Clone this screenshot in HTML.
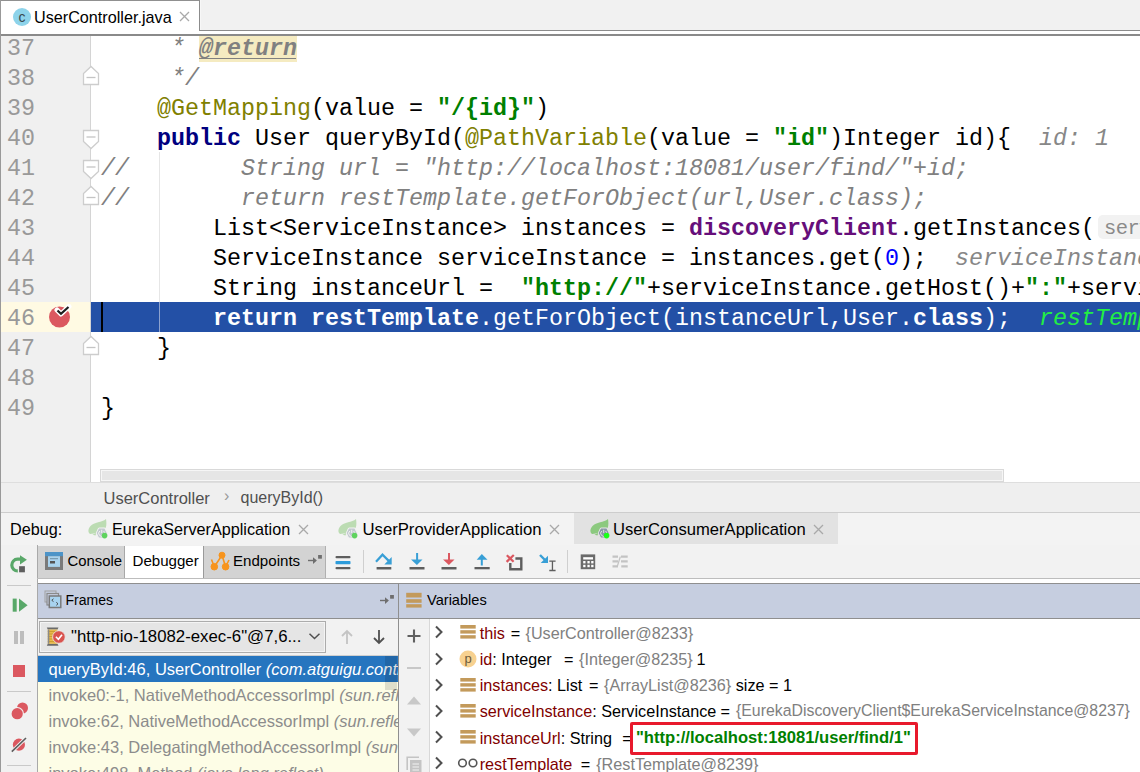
<!DOCTYPE html>
<html><head><meta charset="utf-8"><style>
*{box-sizing:border-box}
html,body{margin:0;padding:0}
body{width:1140px;height:772px;overflow:hidden;position:relative;background:#f0f0f0;font-family:"Liberation Sans",sans-serif;}
.a{position:absolute}
.mono{font-family:"Liberation Mono",monospace;font-size:23.33px;line-height:30px;white-space:pre}
.ln{position:absolute;left:7px;color:#999999;height:30px}
.cl{position:absolute;left:101px;height:30px;color:#000;padding-top:2px}
.kw{color:#000080;font-weight:bold}
.str{color:#008000;font-weight:bold}
.ann{color:#808000}
.cm{color:#808080;font-style:italic}
.num{color:#0000ff}
.fld{color:#660e7a;font-weight:bold}
.dv{color:#878787;font-style:italic}
.hint{color:#8a8a8a}
.ui{font-family:"Liberation Sans",sans-serif;white-space:pre}
</style></head><body>

<div class="a" style="left:0;top:0;width:200px;height:1px;background:#909090"></div>
<div class="a" style="left:200px;top:0;width:940px;height:30px;background:#f1f1f1"></div>
<div class="a" style="left:200px;top:0;width:1px;height:30px;background:#f7f7f7"></div>
<div class="a" style="left:199px;top:30px;width:941px;height:1px;background:#8c8c8c"></div>
<div class="a" style="left:199px;top:31px;width:941px;height:3px;background:#fff"></div>
<div class="a" style="left:1px;top:1px;width:198px;height:33px;background:#fff"></div>
<div class="a" style="left:199px;top:0;width:1px;height:31px;background:#8c8c8c"></div>
<div class="a" style="left:1px;top:34px;width:1139px;height:2px;background:#8a8a8a"></div>
<div class="a" style="left:13px;top:8px;width:18px;height:18px;border-radius:50%;background:#8dd3ea"></div>
<div class="a ui" style="left:16px;top:5px;width:12px;text-align:center;font-size:14px;line-height:24px;color:#38464c">c</div>
<div class="a ui" style="left:34px;top:7px;font-size:16.2px;line-height:20px;color:#000">UserController.java</div>
<svg class="a" style="left:179px;top:11px" width="11" height="11" viewBox="0 0 11 11"><path d="M1 1 L10 10 M10 1 L1 10" stroke="#a9a9a9" stroke-width="1.3"/></svg>

<div class="a" style="left:0;top:36px;width:1140px;height:446px;background:#fff;overflow:hidden">
<div class="a" style="left:0;top:0;width:1px;height:446px;background:#999"></div>
<div class="a" style="left:1px;top:0;width:89px;height:446px;background:#f0f0f0"></div>
<div class="a" style="left:1px;top:266px;width:89px;height:30px;background:#fffae3"></div>
<div class="a" style="left:90px;top:0;width:1px;height:446px;background:#d4d4d4"></div>
<div class="a" style="left:91px;top:266px;width:1049px;height:30px;background:#2350a6"></div>
<div class="a" style="left:159px;top:116px;width:1px;height:150px;background:#e6e6e6"></div>
<div class="a" style="left:159px;top:266px;width:1px;height:30px;background:#8da2cf"></div>
<div class="a" style="left:101px;top:266px;width:2px;height:30px;background:#000"></div>
<div class="a" style="left:199px;top:-4px;width:98px;height:30px;background:#f5ebc1"></div>
<div class="a" style="left:199px;top:22px;width:97px;height:1px;background:#808080"></div>
<div class="a" style="left:1097.5px;top:178.8px;width:80px;height:24.6px;border-radius:5px;background:#f2f2f2"></div>
<div class="a mono" style="left:1104px;top:180px;font-size:20.5px;line-height:26px;letter-spacing:-0.6px;color:#8a8a8a">serviceId:</div>
<svg class="a" style="left:82px;top:29px" width="18" height="21" viewBox="0 0 18 21"><path d="M1.5 19.5 H16.5 V8.5 L9 1.5 L1.5 8.5 Z" fill="#fff" stroke="#cdcdcd" stroke-width="1.3"/><path d="M4.5 12.5 H13.5" stroke="#c4c4c4" stroke-width="1.3"/></svg>
<svg class="a" style="left:82px;top:299px" width="18" height="21" viewBox="0 0 18 21"><path d="M1.5 19.5 H16.5 V8.5 L9 1.5 L1.5 8.5 Z" fill="#fff" stroke="#cdcdcd" stroke-width="1.3"/><path d="M4.5 12.5 H13.5" stroke="#c4c4c4" stroke-width="1.3"/></svg>
<svg class="a" style="left:82px;top:149px" width="18" height="21" viewBox="0 0 18 21"><path d="M1.5 19.5 H16.5 V8.5 L9 1.5 L1.5 8.5 Z" fill="#fff" stroke="#cdcdcd" stroke-width="1.3"/><path d="M4.5 12.5 H13.5" stroke="#c4c4c4" stroke-width="1.3"/></svg>
<svg class="a" style="left:82px;top:93px" width="18" height="21" viewBox="0 0 18 21"><path d="M1.5 1.5 H16.5 V12.5 L9 19.5 L1.5 12.5 Z" fill="#fff" stroke="#cdcdcd" stroke-width="1.3"/><path d="M4.5 8 H13.5" stroke="#c4c4c4" stroke-width="1.3"/></svg>
<svg class="a" style="left:82px;top:123px" width="18" height="21" viewBox="0 0 18 21"><path d="M1.5 1.5 H16.5 V12.5 L9 19.5 L1.5 12.5 Z" fill="#fff" stroke="#cdcdcd" stroke-width="1.3"/><path d="M4.5 8 H13.5" stroke="#c4c4c4" stroke-width="1.3"/></svg>
<svg class="a" style="left:46px;top:268px" width="28" height="28" viewBox="0 0 28 28"><circle cx="13.5" cy="13" r="10.5" fill="#db5860"/><path d="M11 6 L15 10 L23 2.5" fill="none" stroke="#fff" stroke-width="5" stroke-linecap="round" stroke-linejoin="round"/><path d="M11.5 6.5 L15 9.8 L22.5 3" fill="none" stroke="#1c1c1c" stroke-width="2.2"/></svg>
<div class="ln mono" style="top:-4px;padding-top:2px">37</div>
<div class="cl mono" style="top:-4px">     <span class="cm">* </span><span style="color:#808080;font-weight:bold;font-style:italic">@return</span></div>
<div class="ln mono" style="top:26px;padding-top:2px">38</div>
<div class="cl mono" style="top:26px">     <span class="cm">*/</span></div>
<div class="ln mono" style="top:56px;padding-top:2px">39</div>
<div class="cl mono" style="top:56px">    <span class="ann">@GetMapping</span>(value = <span class="str">"/{id}"</span>)</div>
<div class="ln mono" style="top:86px;padding-top:2px">40</div>
<div class="cl mono" style="top:86px">    <span class="kw">public</span> User queryById(<span class="ann">@PathVariable</span>(value = <span class="str">"id"</span>)Integer id){  <span class="dv">id: 1</span></div>
<div class="ln mono" style="top:116px;padding-top:2px">41</div>
<div class="cl mono" style="top:116px"><span class="cm">//        String url = "http://localhost:18081/user/find/"+id;</span></div>
<div class="ln mono" style="top:146px;padding-top:2px">42</div>
<div class="cl mono" style="top:146px"><span class="cm">//        return restTemplate.getForObject(url,User.class);</span></div>
<div class="ln mono" style="top:176px;padding-top:2px">43</div>
<div class="cl mono" style="top:176px">        List&lt;ServiceInstance&gt; instances = <span class="fld">discoveryClient</span>.getInstances(</div>
<div class="ln mono" style="top:206px;padding-top:2px">44</div>
<div class="cl mono" style="top:206px">        ServiceInstance serviceInstance = instances.get(<span class="num">0</span>);  <span class="dv">serviceInstance: EurekaDiscoveryClient</span></div>
<div class="ln mono" style="top:236px;padding-top:2px">45</div>
<div class="cl mono" style="top:236px">        String instanceUrl =  <span class="str">"http://"</span>+serviceInstance.getHost()+<span class="str">":"</span>+serviceInstance.getPort()</div>
<div class="ln mono" style="top:266px;padding-top:2px">46</div>
<div class="cl mono" style="top:266px;color:#fff">        <span style="font-weight:bold">return restTemplate</span>.getForObject(instanceUrl,User.<span style="font-weight:bold">class</span>);  <span style="color:#22ee44;font-style:italic">restTemplate: RestTemplate</span></div>
<div class="ln mono" style="top:296px;padding-top:2px">47</div>
<div class="cl mono" style="top:296px">    }</div>
<div class="ln mono" style="top:326px;padding-top:2px">48</div>
<div class="cl mono" style="top:326px"></div>
<div class="ln mono" style="top:356px;padding-top:2px">49</div>
<div class="cl mono" style="top:356px">}</div>
<div class="a" style="left:100px;top:433px;width:904px;height:13px;background:#e6e6e6;border:1px solid #d9d9d9;box-shadow:inset 0 0 0 1px #f6f6f6"></div>
</div>
<div class="a" style="left:1px;top:482px;width:1139px;height:30px;background:#efefef;"></div>
<div class="a" style="left:1px;top:482px;width:1139px;height:1px;background:#dedede;"></div>
<div class="a" style="left:1px;top:512px;width:1139px;height:1px;background:#cdcdcd;"></div>
<div class="a ui" style="left:103.5px;top:487.7px;font-size:16.5px;line-height:20px;color:#505050;">UserController</div>
<div class="a ui" style="left:224px;top:486px;font-size:16px;line-height:20px;color:#999;">&#8250;</div>
<div class="a ui" style="left:240.5px;top:487.7px;font-size:16px;line-height:20px;color:#505050;">queryById()</div>
<div class="a" style="left:1px;top:513px;width:1139px;height:32px;background:#f3f3f3;"></div>
<div class="a" style="left:574px;top:513px;width:264px;height:31px;background:#e2e2e2;"></div>
<div class="a ui" style="left:10px;top:519px;font-size:16.2px;line-height:20px;color:#000;">Debug:</div>
<svg class="a" style="left:88px;top:519px" width="21" height="21" viewBox="0 0 21 21">
<path d="M18 0 C14 3.5 6 3 2.5 7 C-0.5 10.5 0 14 2.2 15 L9 14 L10 9 L17.8 8.8 C18.6 6 18.5 3 18 0 Z" fill="#bcdcb3"/>
<path d="M4.5 15.8 L8.5 13.8 L7.5 16.5 Z" fill="#bcdcb3"/>
<path d="M8.2 14 L10.7 9 H16.7 L19.2 14 L16.7 19 H10.7 Z" fill="#c3c9d0" stroke="#f1f1f1" stroke-width="1"/>
<path d="M13.7 10.8 V14 M11.8 12 A3 3 0 1 0 15.6 12" fill="none" stroke="#f1f1f1" stroke-width="1"/>
<circle cx="16.6" cy="16.6" r="2.8" fill="#5fd35f"/></svg>
<div class="a ui" style="left:112px;top:519px;font-size:16.2px;line-height:20px;color:#000;">EurekaServerApplication</div>
<svg class="a" style="left:298px;top:524px" width="11" height="11" viewBox="0 0 11 11"><path d="M1 1 L10 10 M10 1 L1 10" stroke="#a9a9a9" stroke-width="1.3"/></svg>
<svg class="a" style="left:338px;top:519px" width="21" height="21" viewBox="0 0 21 21">
<path d="M18 0 C14 3.5 6 3 2.5 7 C-0.5 10.5 0 14 2.2 15 L9 14 L10 9 L17.8 8.8 C18.6 6 18.5 3 18 0 Z" fill="#bcdcb3"/>
<path d="M4.5 15.8 L8.5 13.8 L7.5 16.5 Z" fill="#bcdcb3"/>
<path d="M8.2 14 L10.7 9 H16.7 L19.2 14 L16.7 19 H10.7 Z" fill="#c3c9d0" stroke="#f1f1f1" stroke-width="1"/>
<path d="M13.7 10.8 V14 M11.8 12 A3 3 0 1 0 15.6 12" fill="none" stroke="#f1f1f1" stroke-width="1"/>
<circle cx="16.6" cy="16.6" r="2.8" fill="#5fd35f"/></svg>
<div class="a ui" style="left:362.5px;top:519.8px;font-size:16.7px;line-height:20px;color:#000;">UserProviderApplication</div>
<svg class="a" style="left:549px;top:524px" width="11" height="11" viewBox="0 0 11 11"><path d="M1 1 L10 10 M10 1 L1 10" stroke="#a9a9a9" stroke-width="1.3"/></svg>
<svg class="a" style="left:590px;top:519px" width="21" height="21" viewBox="0 0 21 21">
<path d="M18 0 C14 3.5 6 3 2.5 7 C-0.5 10.5 0 14 2.2 15 L9 14 L10 9 L17.8 8.8 C18.6 6 18.5 3 18 0 Z" fill="#8cc97f"/>
<path d="M4.5 15.8 L8.5 13.8 L7.5 16.5 Z" fill="#8cc97f"/>
<path d="M8.2 14 L10.7 9 H16.7 L19.2 14 L16.7 19 H10.7 Z" fill="#8a98a8" stroke="#e2e2e2" stroke-width="1"/>
<path d="M13.7 10.8 V14 M11.8 12 A3 3 0 1 0 15.6 12" fill="none" stroke="#e2e2e2" stroke-width="1"/>
<circle cx="16.6" cy="16.6" r="2.8" fill="#1aff1a"/></svg>
<div class="a ui" style="left:613px;top:519.8px;font-size:16.6px;line-height:20px;color:#000;">UserConsumerApplication</div>
<svg class="a" style="left:813px;top:524px" width="11" height="11" viewBox="0 0 11 11"><path d="M1 1 L10 10 M10 1 L1 10" stroke="#a9a9a9" stroke-width="1.3"/></svg>
<div class="a" style="left:1px;top:545px;width:36px;height:227px;background:#f1f1f1;"></div>
<div class="a" style="left:37px;top:545px;width:1px;height:227px;background:#a9a9a9;"></div>
<svg class="a" style="left:5px;top:552px" width="28" height="26" viewBox="0 0 28 26"><path d="M15.8 7.2 H12.5 A5.85 5.85 0 0 0 12.8 18.9" fill="none" stroke="#59a869" stroke-width="3.2"/><path d="M15 3.2 L21.9 7.7 L15 12.6 Z" fill="#59a869"/><rect x="14.1" y="14.2" width="5.8" height="6.1" fill="#5e5e5e"/></svg>
<div class="a" style="left:7px;top:585px;width:24px;height:1px;background:#c9c9c9;"></div>
<svg class="a" style="left:5px;top:595px" width="28" height="20" viewBox="0 0 28 20"><rect x="7.7" y="3.6" width="4" height="13.1" fill="#59a869"/><path d="M14 3.6 L22.6 10.15 L14 16.7 Z" fill="#59a869"/></svg>
<div class="a" style="left:14px;top:631px;width:4px;height:13px;background:#bdbdbd;"></div>
<div class="a" style="left:20px;top:631px;width:4px;height:13px;background:#bdbdbd;"></div>
<div class="a" style="left:13px;top:665px;width:12px;height:12px;background:#db5860;"></div>
<div class="a" style="left:7px;top:691px;width:24px;height:1px;background:#c9c9c9;"></div>
<svg class="a" style="left:5px;top:698px" width="28" height="26" viewBox="0 0 28 26"><circle cx="17.5" cy="10" r="5.5" fill="#db5860"/><circle cx="12.2" cy="15.7" r="6.8" fill="#f1f1f1"/><circle cx="12.2" cy="15.7" r="5.6" fill="#db5860"/></svg>
<svg class="a" style="left:5px;top:733px" width="28" height="26" viewBox="0 0 28 26"><circle cx="13.9" cy="11.7" r="6.1" fill="#db5860"/><path d="M6.8 18.7 L21 5" stroke="#f1f1f1" stroke-width="3.4"/><path d="M6.8 18.7 L21 5" stroke="#5e5e5e" stroke-width="1.6"/></svg>
<div class="a" style="left:7px;top:765px;width:24px;height:1px;background:#c9c9c9;"></div>
<div class="a" style="left:38px;top:545px;width:1102px;height:33px;background:#f2f2f2;"></div>
<div class="a" style="left:38px;top:546px;width:87px;height:32px;background:#d3d3d3;border-right:1px solid #a8a8a8"></div>
<div class="a" style="left:125px;top:546px;width:78px;height:32px;background:#fff;"></div>
<div class="a" style="left:203px;top:546px;width:123px;height:32px;background:#d3d3d3;border-left:1px solid #9a9a9a;border-right:1px solid #b0b0b0"></div>
<div class="a" style="left:37px;top:578px;width:1103px;height:1px;background:#bdbdbd;"></div>
<div class="a" style="left:38px;top:579px;width:1102px;height:4px;background:#fff;"></div>
<div class="a" style="left:38px;top:583px;width:1102px;height:1px;background:#8f8f8f;"></div>
<div class="a ui" style="left:67.5px;top:551.3px;font-size:14.9px;line-height:20px;color:#000;">Console</div>
<div class="a ui" style="left:132.5px;top:551.3px;font-size:15.1px;line-height:20px;color:#000;">Debugger</div>
<div class="a ui" style="left:233px;top:551.3px;font-size:15.1px;line-height:20px;color:#000;">Endpoints</div>
<svg class="a" style="left:45px;top:552px" width="18" height="18" viewBox="0 0 18 18"><rect x="0" y="0" width="18" height="18" fill="#7a7a7a"/><rect x="0" y="0" width="18" height="4.2" fill="#4d94c8"/><rect x="3" y="4.2" width="12" height="10.7" fill="#a9d3ee"/><rect x="5" y="9" width="5" height="2.5" fill="#555"/><rect x="5" y="6.2" width="8" height="1" fill="#6d8ea3"/></svg>
<svg class="a" style="left:208px;top:550px" width="24" height="22" viewBox="0 0 24 22"><g fill="#f7941d" stroke="#f7941d"><circle cx="14" cy="5.2" r="3"/><circle cx="6.3" cy="16.7" r="3.3"/><circle cx="17.6" cy="16.7" r="3.3"/><path d="M14 5.2 L6.3 16.7 M14 5.2 L17.6 16.7 M6.3 16.7 L3.5 9.5 M17.6 16.7 L21 10" stroke-width="1.6" fill="none"/></g></svg>
<svg class="a" style="left:306px;top:553px" width="18" height="12" viewBox="0 0 18 12"><path d="M2 7.5 H8" stroke="#6e6e6e" stroke-width="1.4"/><path d="M7 4.3 L10.9 7.6 L7 11 Z" fill="#6e6e6e"/><rect x="12.1" y="2" width="3.8" height="3.7" fill="#6e6e6e"/></svg>
<svg class="a" style="left:334px;top:554px" width="18" height="17" viewBox="0 0 18 17"><rect x="1.5" y="2" width="15" height="2.2" rx="1" fill="#5e5e5e"/><rect x="1.5" y="6.9" width="15" height="3.4" rx="0.8" fill="#2d9cdb"/><rect x="1.5" y="12.9" width="15" height="2.4" rx="1" fill="#5e5e5e"/></svg>
<div class="a" style="left:363px;top:550px;width:1px;height:23px;background:#cfcfcf;"></div>
<svg class="a" style="left:374px;top:552px" width="20" height="19" viewBox="0 0 20 19"><path d="M2 9.8 L8.5 2.7 L15.5 9.6" fill="none" stroke="#389fd6" stroke-width="2.2"/><path d="M17.7 5 V12.4 H10.3 Z" fill="#389fd6"/><rect x="2.6" y="15" width="14.7" height="2.5" fill="#5e5e5e"/></svg>
<svg class="a" style="left:408px;top:552px" width="18" height="19" viewBox="0 0 18 19"><rect x="8.1" y="1" width="2" height="8" fill="#389fd6"/><path d="M3 7.4 H14.5 L8.9 13 Z" fill="#389fd6"/><rect x="1.5" y="15" width="15" height="2.5" fill="#5e5e5e"/></svg>
<svg class="a" style="left:440px;top:552px" width="18" height="19" viewBox="0 0 18 19"><rect x="8" y="1" width="2" height="8" fill="#db5860"/><path d="M3 7.4 H14.5 L8.9 13 Z" fill="#db5860"/><rect x="1.5" y="15" width="15" height="2.5" fill="#5e5e5e"/></svg>
<svg class="a" style="left:473px;top:552px" width="18" height="19" viewBox="0 0 18 19"><rect x="7.8" y="7" width="2" height="6.5" fill="#389fd6"/><path d="M3.7 7.7 H14.5 L8.8 1.9 Z" fill="#389fd6"/><rect x="1.5" y="15" width="15.2" height="2.3" fill="#5e5e5e"/></svg>
<svg class="a" style="left:504px;top:552px" width="20" height="19" viewBox="0 0 20 19"><path d="M11.4 6.5 H17.3 V17.2 H6.3 V11" fill="none" stroke="#5e5e5e" stroke-width="2.4"/><path d="M2.8 3.2 L9.6 9.8 M9.8 3 L2.6 9.9" stroke="#db5860" stroke-width="2.2"/></svg>
<svg class="a" style="left:538px;top:552px" width="20" height="20" viewBox="0 0 20 20"><path d="M2 3 L7.5 8.5" stroke="#389fd6" stroke-width="2.4"/><path d="M10 3.8 V11 H2.7 Z" fill="#389fd6"/><path d="M11.3 9.2 H17.6 M14.45 9.2 V18.5 M11.3 18.5 H17.6" stroke="#5e5e5e" stroke-width="1.3" fill="none"/></svg>
<div class="a" style="left:567px;top:550px;width:1px;height:23px;background:#cfcfcf;"></div>
<svg class="a" style="left:579px;top:553px" width="18" height="18" viewBox="0 0 18 18"><rect x="1.7" y="1.4" width="14.5" height="14.8" fill="#6b6b6b"/><rect x="4.2" y="4.2" width="9.8" height="2.3" fill="#fff"/><g fill="#fff"><rect x="4.2" y="8" width="2.3" height="2.4"/><rect x="8.4" y="8" width="2.3" height="2.4"/><rect x="12.2" y="8" width="2.3" height="2.4"/><rect x="4.2" y="11.8" width="2.3" height="2.4"/><rect x="8.4" y="11.8" width="2.3" height="2.4"/><rect x="12.2" y="11.8" width="2.3" height="2.4"/></g></svg>
<svg class="a" style="left:611px;top:554px" width="18" height="16" viewBox="0 0 18 16"><g stroke="#c3c3c3" stroke-width="2.2" fill="none"><path d="M1.5 2.6 H7 M10 2.6 H16.7 M1.5 7.4 H7 M10 7.4 H16.7 M1.5 12.4 H7 M10.3 12.4 H16.7"/><path d="M9.3 2.6 L6.3 12.4" stroke-width="1.3"/></g></svg>
<div class="a" style="left:38px;top:584px;width:360px;height:188px;overflow:hidden">
<div class="a" style="left:0px;top:0px;width:360px;height:34px;background:#c6cee0;"></div>
<div class="a" style="left:0px;top:34px;width:360px;height:1px;background:#8f8f8f;"></div>
<svg class="a" style="left:6px;top:6px" width="18" height="19" viewBox="0 0 18 19"><rect x="1" y="1" width="11" height="11" fill="none" stroke="#a0a0a0" stroke-width="1"/><rect x="3" y="3.5" width="11.5" height="11.5" fill="#c6cee0" stroke="#8a8a8a" stroke-width="1.2"/><rect x="5.3" y="6" width="11.5" height="11.5" fill="#a8d3ef" stroke="#7a7a7a" stroke-width="1.5"/><path d="M9.5 8.8 L7.8 10.3 L9.5 11.6 M12.3 12.3 L14 13.8 L12.3 15.3" fill="none" stroke="#404040" stroke-width="0.9"/></svg>
<div class="a ui" style="left:27.5px;top:5.5px;font-size:14px;line-height:20px;color:#000;">Frames</div>
<svg class="a" style="left:340px;top:9px" width="18" height="12" viewBox="0 0 18 12"><path d="M2 7.5 H8" stroke="#6e6e6e" stroke-width="1.4"/><path d="M7 4.3 L10.9 7.6 L7 11 Z" fill="#6e6e6e"/><rect x="12.1" y="2" width="3.8" height="3.7" fill="#6e6e6e"/></svg>
<div class="a" style="left:0px;top:35px;width:360px;height:37px;background:#f2f2f2;"></div>
<div class="a" style="left:1px;top:37px;width:287px;height:32px;background:#e5e5e5;border:1px solid #acacac;box-shadow:inset 0 0 0 1px #f4f4f4"></div>
<svg class="a" style="left:8px;top:43px" width="20" height="20" viewBox="0 0 20 20"><path d="M0.8 0.6 H12.5 L11.5 2.6 H1.8 Z M0.8 18.8 H12.5 L11.5 16.8 H1.8 Z" fill="#6a6a6a"/><rect x="1.8" y="2.6" width="9.7" height="14.2" fill="#e8b94a"/><path d="M1.8 4.5 H11.5 M1.8 7 H11.5 M1.8 9.5 H11.5 M1.8 12 H11.5 M1.8 14.5 H11.5" stroke="#c08f2a" stroke-width="0.7"/><rect x="1.8" y="2.6" width="1.5" height="14.2" fill="#8a8a8a"/><circle cx="12.9" cy="10" r="6.3" fill="#d9534f" stroke="#ececec" stroke-width="0.8"/><path d="M9.9 9.8 L12.4 12.3 L16 7.8" fill="none" stroke="#fff" stroke-width="1.6"/></svg>
<div class="a ui" style="left:33px;top:43px;font-size:16.8px;line-height:20px;color:#000;">"http-nio-18082-exec-6"@7,6...</div>
<svg class="a" style="left:270px;top:48px" width="13" height="9" viewBox="0 0 13 9"><path d="M1.5 1.8 L6.5 6.5 L11.5 1.8" fill="none" stroke="#505050" stroke-width="1.5"/></svg>
<svg class="a" style="left:301px;top:45px" width="16" height="16" viewBox="0 0 16 16"><path d="M8 2 V15 M3 7 L8 2 L13 7" fill="none" stroke="#c4c4c4" stroke-width="1.8"/></svg>
<svg class="a" style="left:333px;top:45px" width="16" height="16" viewBox="0 0 16 16"><path d="M8 1 V14 M3 9 L8 14 L13 9" fill="none" stroke="#505050" stroke-width="1.8"/></svg>
<div class="a" style="left:0px;top:72px;width:360px;height:116px;background:#fdfde6;"></div>
<div class="a" style="left:0px;top:71px;width:360px;height:1px;background:#cfcfcf;"></div>
<div class="a" style="left:0px;top:72px;width:360px;height:26px;background:#2675bf;"></div>
<div class="a ui" style="left:10.5px;top:75px;font-size:16.5px;line-height:20px;color:#fff;">queryById:46, UserController <i>(com.atguigu.controller)</i></div>
<div class="a ui" style="left:10.5px;top:101px;font-size:16.5px;line-height:20px;color:#8c8c8c;">invoke0:-1, NativeMethodAccessorImpl <i>(sun.reflect)</i></div>
<div class="a ui" style="left:10.5px;top:127px;font-size:16.5px;line-height:20px;color:#8c8c8c;">invoke:62, NativeMethodAccessorImpl <i>(sun.reflect)</i></div>
<div class="a ui" style="left:10.5px;top:153px;font-size:16.5px;line-height:20px;color:#8c8c8c;">invoke:43, DelegatingMethodAccessorImpl <i>(sun.reflect)</i></div>
<div class="a ui" style="left:10.5px;top:179px;font-size:16.5px;line-height:20px;color:#8c8c8c;">invoke:498, Method <i>(java.lang.reflect)</i></div>
<div class="a" style="left:347px;top:72px;width:12px;height:34px;background:rgba(0,0,0,0.12);"></div>
</div>
<div class="a" style="left:398px;top:584px;width:1px;height:188px;background:#8f8f8f;"></div>
<div class="a" style="left:399px;top:584px;width:741px;height:188px;overflow:hidden">
<div class="a" style="left:0px;top:0px;width:741px;height:34px;background:#c6cee0;"></div>
<div class="a" style="left:0px;top:34px;width:741px;height:1px;background:#8f8f8f;"></div>
<svg class="a" style="left:7px;top:8px" width="16" height="16" viewBox="0 0 16 16"><rect x="0.2" y="0.8" width="15.4" height="4.7" fill="#c39a5b"/><rect x="0.2" y="7.2" width="15.4" height="3.6" fill="#c39a5b"/><rect x="0.2" y="12.2" width="15.4" height="3.4" fill="#c39a5b"/></svg>
<div class="a ui" style="left:28px;top:5.5px;font-size:14.6px;line-height:20px;color:#000;">Variables</div>
<div class="a" style="left:0px;top:35px;width:30px;height:153px;background:#f2f2f2;"></div>
<div class="a" style="left:30px;top:35px;width:1px;height:153px;background:#d8d8d8;"></div>
<div class="a" style="left:31px;top:35px;width:710px;height:153px;background:#fff;"></div>
<svg class="a" style="left:6px;top:43px" width="18" height="18" viewBox="0 0 18 18"><path d="M9 2.5 V15.5 M2.5 9 H15.5" stroke="#606060" stroke-width="2.1"/></svg>
<div class="a" style="left:8px;top:83px;width:14px;height:2px;background:#c8c8c8;"></div>
<svg class="a" style="left:8px;top:112px" width="14" height="9" viewBox="0 0 14 9"><path d="M0 8.5 L7 0.5 L14 8.5 Z" fill="#c8c8c8"/></svg>
<svg class="a" style="left:8px;top:144px" width="14" height="9" viewBox="0 0 14 9"><path d="M0 0.5 L7 8.5 L14 0.5 Z" fill="#c8c8c8"/></svg>
<svg class="a" style="left:7px;top:172px" width="18" height="18" viewBox="0 0 18 18"><path d="M1.2 14 V1.2 H13" fill="none" stroke="#c4c4c4" stroke-width="1.6"/><rect x="4" y="4" width="11.5" height="12" fill="#c4c4c4"/><path d="M6.5 8 H13 M6.5 11 H13 M6.5 14 H13" stroke="#f2f2f2" stroke-width="1.2"/></svg>
<svg class="a" style="left:35px;top:41.3px" width="10" height="14" viewBox="0 0 10 14"><path d="M2 1.5 L7.5 7 L2 12.5" fill="none" stroke="#505050" stroke-width="2"/></svg>
<svg class="a" style="left:61px;top:40.3px" width="16" height="16" viewBox="0 0 16 16"><rect x="0.3" y="1" width="15.4" height="3.6" fill="#c39a5b"/><rect x="0.3" y="6.2" width="15.4" height="3.4" fill="#c39a5b"/><rect x="0.3" y="11.2" width="15.4" height="3.4" fill="#c39a5b"/></svg>
<div class="a ui" style="left:80.7px;top:38.7px;font-size:16.2px;line-height:20px;color:#000;color:#7f0000">this</div>
<div class="a ui" style="left:111.7px;top:38.7px;font-size:16.2px;line-height:20px;color:#000;">=</div>
<div class="a ui" style="left:126.5px;top:38.7px;font-size:16.2px;line-height:20px;color:#000;color:#808080">{UserController@8233}</div>
<svg class="a" style="left:35px;top:67.5px" width="10" height="14" viewBox="0 0 10 14"><path d="M2 1.5 L7.5 7 L2 12.5" fill="none" stroke="#505050" stroke-width="2"/></svg>
<svg class="a" style="left:60px;top:65.5px" width="18" height="18" viewBox="0 0 18 18"><circle cx="9" cy="9" r="8.5" fill="#f7d190"/><text x="9" y="13.3" text-anchor="middle" font-family="Liberation Sans" font-size="13" fill="#6b5a3a">p</text></svg>
<div class="a ui" style="left:80.7px;top:64.9px;font-size:16.2px;line-height:20px;color:#000;"><span style="color:#7f0000">id</span>: Integer</div>
<div class="a ui" style="left:165px;top:64.9px;font-size:16.2px;line-height:20px;color:#000;">=</div>
<div class="a ui" style="left:180px;top:64.9px;font-size:16.2px;line-height:20px;color:#000;color:#808080">{Integer@8235}</div>
<div class="a ui" style="left:297.5px;top:64.9px;font-size:16.2px;line-height:20px;color:#000;">1</div>
<svg class="a" style="left:35px;top:93.69999999999999px" width="10" height="14" viewBox="0 0 10 14"><path d="M2 1.5 L7.5 7 L2 12.5" fill="none" stroke="#505050" stroke-width="2"/></svg>
<svg class="a" style="left:61px;top:92.69999999999999px" width="16" height="16" viewBox="0 0 16 16"><rect x="0.3" y="1" width="15.4" height="3.6" fill="#c39a5b"/><rect x="0.3" y="6.2" width="15.4" height="3.4" fill="#c39a5b"/><rect x="0.3" y="11.2" width="15.4" height="3.4" fill="#c39a5b"/></svg>
<div class="a ui" style="left:80.7px;top:91.1px;font-size:16.2px;line-height:20px;color:#000;"><span style="color:#7f0000">instances</span>: List</div>
<div class="a ui" style="left:190px;top:91.1px;font-size:16.2px;line-height:20px;color:#000;">=</div>
<div class="a ui" style="left:205px;top:91.1px;font-size:16.2px;line-height:20px;color:#000;color:#808080">{ArrayList@8236}</div>
<div class="a ui" style="left:336.7px;top:91.1px;font-size:16.2px;line-height:20px;color:#000;">size = 1</div>
<svg class="a" style="left:35px;top:119.89999999999999px" width="10" height="14" viewBox="0 0 10 14"><path d="M2 1.5 L7.5 7 L2 12.5" fill="none" stroke="#505050" stroke-width="2"/></svg>
<svg class="a" style="left:61px;top:118.89999999999999px" width="16" height="16" viewBox="0 0 16 16"><rect x="0.3" y="1" width="15.4" height="3.6" fill="#c39a5b"/><rect x="0.3" y="6.2" width="15.4" height="3.4" fill="#c39a5b"/><rect x="0.3" y="11.2" width="15.4" height="3.4" fill="#c39a5b"/></svg>
<div class="a ui" style="left:80.7px;top:117.3px;font-size:16.2px;line-height:20px;color:#000;"><span style="color:#7f0000">serviceInstance</span>: ServiceInstance</div>
<div class="a ui" style="left:321.5px;top:117.3px;font-size:16.2px;line-height:20px;color:#000;">=</div>
<div class="a ui" style="left:337px;top:117.3px;font-size:16.2px;line-height:20px;color:#000;color:#808080;font-size:15.85px">{EurekaDiscoveryClient$EurekaServiceInstance@8237}</div>
<svg class="a" style="left:35px;top:146.1px" width="10" height="14" viewBox="0 0 10 14"><path d="M2 1.5 L7.5 7 L2 12.5" fill="none" stroke="#505050" stroke-width="2"/></svg>
<svg class="a" style="left:61px;top:145.1px" width="16" height="16" viewBox="0 0 16 16"><rect x="0.3" y="1" width="15.4" height="3.6" fill="#c39a5b"/><rect x="0.3" y="6.2" width="15.4" height="3.4" fill="#c39a5b"/><rect x="0.3" y="11.2" width="15.4" height="3.4" fill="#c39a5b"/></svg>
<div class="a ui" style="left:80.7px;top:143.5px;font-size:16.2px;line-height:20px;color:#000;"><span style="color:#7f0000">instanceUrl</span>: String</div>
<div class="a ui" style="left:223.3px;top:143.5px;font-size:16.2px;line-height:20px;color:#000;">=</div>
<div class="a ui" style="left:237px;top:143.5px;font-size:16.2px;line-height:20px;color:#000;color:#008000;font-weight:bold;font-size:16.6px;margin-top:0.6px">"http://localhost:18081/user/find/1"</div>
<svg class="a" style="left:35px;top:172.3px" width="10" height="14" viewBox="0 0 10 14"><path d="M2 1.5 L7.5 7 L2 12.5" fill="none" stroke="#505050" stroke-width="2"/></svg>
<svg class="a" style="left:58px;top:173.3px" width="22" height="12" viewBox="0 0 22 12"><circle cx="5.5" cy="6" r="3.8" fill="none" stroke="#555" stroke-width="1.6"/><circle cx="16" cy="6" r="3.8" fill="none" stroke="#555" stroke-width="1.6"/></svg>
<div class="a ui" style="left:80.7px;top:169.7px;font-size:16.2px;line-height:20px;color:#000;color:#7f0000">restTemplate</div>
<div class="a ui" style="left:181.7px;top:169.7px;font-size:16.2px;line-height:20px;color:#000;">=</div>
<div class="a ui" style="left:197.2px;top:169.7px;font-size:16.2px;line-height:20px;color:#000;color:#808080">{RestTemplate@8239}</div>
<div class="a" style="left:230.8px;top:137.6px;width:288px;height:33.8px;border:3.5px solid #e8192c;border-radius:2px"></div>
</div>
<div class="a" style="left:0px;top:0px;width:1px;height:772px;background:#999;"></div>
</body></html>
